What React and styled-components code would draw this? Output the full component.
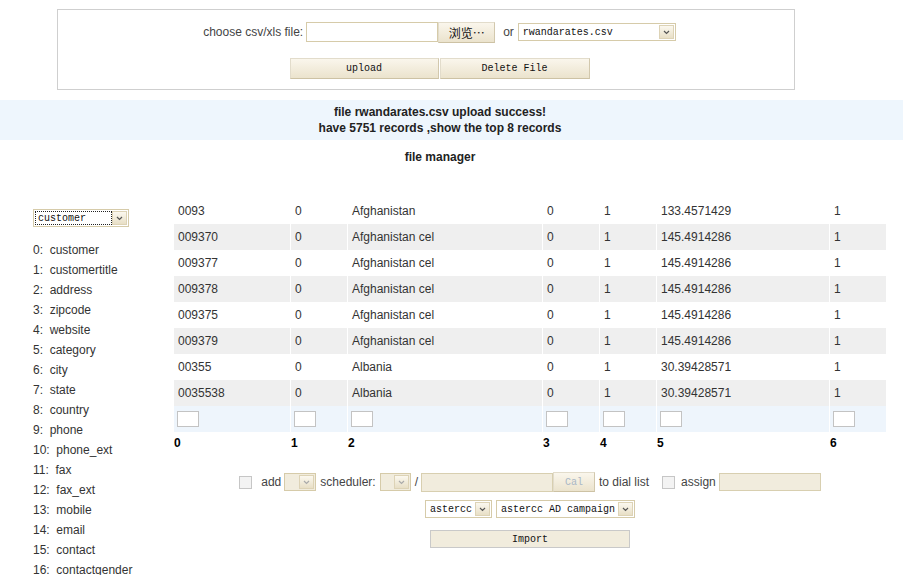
import React from 'react';
import styled, { createGlobalStyle } from 'styled-components';

const GlobalStyle = createGlobalStyle`
  body {
    margin: 0;
    background: #fff;
    font-family: "Liberation Sans", Arial, sans-serif;
    font-size: 12px;
    color: #333;
  }
`;

const mono = `"Liberation Mono", "Noto Sans CJK SC", monospace`;

const UploadBox = styled.div`
  margin: 9px 0 0 57px;
  width: 709px;
  border: 1px solid #cfcfcf;
  padding: 12px 0 10px 27px;
  box-sizing: content-box;
  display: flex;
  flex-direction: column;
  align-items: center;
  gap: 16px;
`;

const Line = styled.div`
  display: flex;
  align-items: center;
  gap: ${p => p.$gap || 0}px;
  height: ${p => p.$h || 20}px;
`;

const Label = styled.span`
  color: #444;
  white-space: pre;
  margin: ${p => p.$m || '0'};
`;

const TextInput = styled.div`
  width: ${p => p.$w}px;
  height: ${p => p.$h || 18}px;
  box-sizing: border-box;
  border: 1px solid ${p => (p.$beige ? '#d8cfb0' : '#d6cba9')};
  background: ${p => (p.$beige ? '#f1ecdd' : '#fff')};
`;

const Button = styled.div`
  width: ${p => p.$w}px;
  height: ${p => p.$h || 21}px;
  box-sizing: border-box;
  display: flex;
  align-items: center;
  justify-content: center;
  border: 1px solid #e2dccb;
  border-right-color: #d2c8ad;
  border-bottom-color: #cdc2a4;
  background: linear-gradient(#faf6ec, #ebe3cd);
  font-family: ${p => (p.$cjk ? `"Noto Sans CJK SC", sans-serif` : mono)};
  font-size: ${p => (p.$cjk ? 12 : 10)}px;
  color: ${p => (p.$muted ? '#a9b7c6' : '#111')};
`;

const PlainButton = styled(Button)`
  border: 1px solid #c9c9c9;
  background: #f1ecdd;
`;

const ComboBox = styled.div`
  width: ${p => p.$w}px;
  height: 18px;
  box-sizing: border-box;
  border: 1px solid #d6cba9;
  background: ${p => (p.$disabled ? '#f1ecdd' : '#fff')};
  display: flex;
  align-items: center;
  padding: 1px;
`;

const ComboText = styled.span`
  flex: 1;
  height: 14px;
  line-height: 13px;
  box-sizing: border-box;
  padding-left: 2px;
  font-family: ${mono};
  font-size: 10px;
  color: #111;
  white-space: pre;
  overflow: hidden;
  border: 1px ${p => (p.$focused ? 'dotted #222' : 'solid transparent')};
`;

const ComboArrow = styled.span`
  width: 15px;
  height: 14px;
  box-sizing: border-box;
  border: 1px solid #ddd3b6;
  background: linear-gradient(#fbf8ef, #e8dfc6);
  display: flex;
  align-items: center;
  justify-content: center;
`;

const Combo = ({ value = '', width, disabled, focused }) => (
  <ComboBox $w={width} $disabled={disabled}>
    <ComboText $focused={focused}>{value}</ComboText>
    <ComboArrow>
      <svg width="7" height="5" viewBox="0 0 7 5">
        <polyline points="1,1 3.5,3.5 6,1" fill="none" stroke={disabled ? '#aaa' : '#555'} strokeWidth="1.2" />
      </svg>
    </ComboArrow>
  </ComboBox>
);

const Banner = styled.div`
  margin-top: 10px;
  height: 40px;
  background: #eef6fd;
  display: flex;
  flex-direction: column;
  justify-content: center;
  width: 880px;
  padding-right: 23px;
`;

const BannerLine = styled.div`
  text-align: center;
  font-weight: bold;
  line-height: 16px;
  color: #222;
`;

const Heading = styled.div`
  width: 880px;
  margin-top: 9px;
  text-align: center;
  font-weight: bold;
  line-height: 16px;
  color: #222;
`;

const Main = styled.div`
  margin-top: 33px;
  display: flex;
`;

const Sidebar = styled.div`
  width: 141px;
  padding: 11px 0 0 33px;
  box-sizing: content-box;
  flex-shrink: 0;
`;

const FieldList = styled.ul`
  list-style: none;
  margin: 13px 0 0;
  padding: 0;
`;

const FieldItem = styled.li`
  line-height: 20px;
  white-space: pre;
  color: #333;
`;

const Content = styled.div`
  width: 712px;
  display: flex;
  flex-direction: column;
  align-items: center;
`;

const Grid = styled.table`
  border-collapse: separate;
  border-spacing: 1px 0;
  margin: 0 -1px;
  table-layout: fixed;
  width: 714px;
`;

const Row = styled.tr`
  background: ${p => (p.$tone === 'gray' ? '#efefef' : p.$tone === 'blue' ? '#eef5fc' : '#fff')};
`;

const Cell = styled.td`
  height: 26px;
  padding: 0 0 0 ${p => p.$pad ?? 4}px;
  color: #333;
  white-space: nowrap;
  overflow: hidden;
`;

const HeadCell = styled.td`
  height: 22px;
  padding: 0;
  font-weight: bold;
  color: #000;
  vertical-align: middle;
`;

const CellInput = styled.div`
  width: 22px;
  height: 16px;
  box-sizing: border-box;
  border: 1px solid #c3c3c3;
  background: #fff;
`;

const Check = styled.span`
  width: 13px;
  height: 13px;
  box-sizing: border-box;
  border: 1px solid #c6c6c6;
  background: #f3f3f3;
  display: inline-block;
`;

const Controls = styled.div`
  margin-top: 18px;
  display: flex;
  flex-direction: column;
  align-items: center;
`;

const widths = [116, 56, 194, 56, 56, 172, 56];

const rows = [
  ['0093', '0', 'Afghanistan', '0', '1', '133.4571429', '1'],
  ['009370', '0', 'Afghanistan cel', '0', '1', '145.4914286', '1'],
  ['009377', '0', 'Afghanistan cel', '0', '1', '145.4914286', '1'],
  ['009378', '0', 'Afghanistan cel', '0', '1', '145.4914286', '1'],
  ['009375', '0', 'Afghanistan cel', '0', '1', '145.4914286', '1'],
  ['009379', '0', 'Afghanistan cel', '0', '1', '145.4914286', '1'],
  ['00355', '0', 'Albania', '0', '1', '30.39428571', '1'],
  ['0035538', '0', 'Albania', '0', '1', '30.39428571', '1'],
];

const fields = [
  'customer', 'customertitle', 'address', 'zipcode', 'website', 'category',
  'city', 'state', 'country', 'phone', 'phone_ext', 'fax', 'fax_ext',
  'mobile', 'email', 'contact', 'contactgender',
];

export default function App() {
  return (
    <>
      <GlobalStyle />
      <UploadBox>
        <Line>
          <Label $m="0 3px 0 0">choose csv/xls file:</Label>
          <TextInput $w={132} $h={20} />
          <Button $w={57} $cjk>浏览…</Button>
          <Label $m="0 4px 0 8px">or</Label>
          <Combo value="rwandarates.csv" width={158} />
        </Line>
        <Line $h={21} $gap={1}>
          <Button $w={149}>upload</Button>
          <Button $w={150}>Delete File</Button>
        </Line>
      </UploadBox>

      <Banner>
        <BannerLine>file rwandarates.csv upload success!</BannerLine>
        <BannerLine>have 5751 records ,show the top 8 records</BannerLine>
      </Banner>

      <Heading>file manager</Heading>

      <Main>
        <Sidebar>
          <Combo value="customer" width={96} focused />
          <FieldList>
            {fields.map((f, i) => (
              <FieldItem key={f}>{`${i}:  ${f}`}</FieldItem>
            ))}
          </FieldList>
        </Sidebar>

        <Content>
          <Grid>
            <colgroup>
              {widths.map((w, i) => <col key={i} style={{ width: w }} />)}
            </colgroup>
            <tbody>
              {rows.map((r, i) => (
                <Row key={i} $tone={i % 2 ? 'gray' : 'white'}>
                  {r.map((c, j) => <Cell key={j}>{c}</Cell>)}
                </Row>
              ))}
              <Row $tone="blue">
                {widths.map((_, j) => (
                  <Cell key={j} $pad={3}><CellInput /></Cell>
                ))}
              </Row>
              <Row>
                {widths.map((_, j) => <HeadCell key={j}>{j}</HeadCell>)}
              </Row>
            </tbody>
          </Grid>

          <Controls>
            <Line $h={20}>
              <Check />
              <Label $m="0 3px 0 9px">add</Label>
              <Combo width={32} disabled />
              <Label $m="0 4px 0 4px">scheduler:</Label>
              <Combo width={31} disabled />
              <Label $m="0 3px 0 4px">/</Label>
              <TextInput $w={132} $h={19} $beige />
              <Button $w={42} $h={20} $muted>Cal</Button>
              <Label $m="0 13px 0 4px">to dial list</Label>
              <Check />
              <Label $m="0 3px 0 6px">assign</Label>
              <TextInput $w={102} $beige />
            </Line>
            <Line $h={18} $gap={4} style={{ marginTop: 8 }}>
              <Combo value="astercc" width={67} />
              <Combo value="astercc AD campaign" width={139} />
            </Line>
            <PlainButton $w={200} $h={18} style={{ marginTop: 12 }}>Import</PlainButton>
          </Controls>
        </Content>
      </Main>
    </>
  );
}
